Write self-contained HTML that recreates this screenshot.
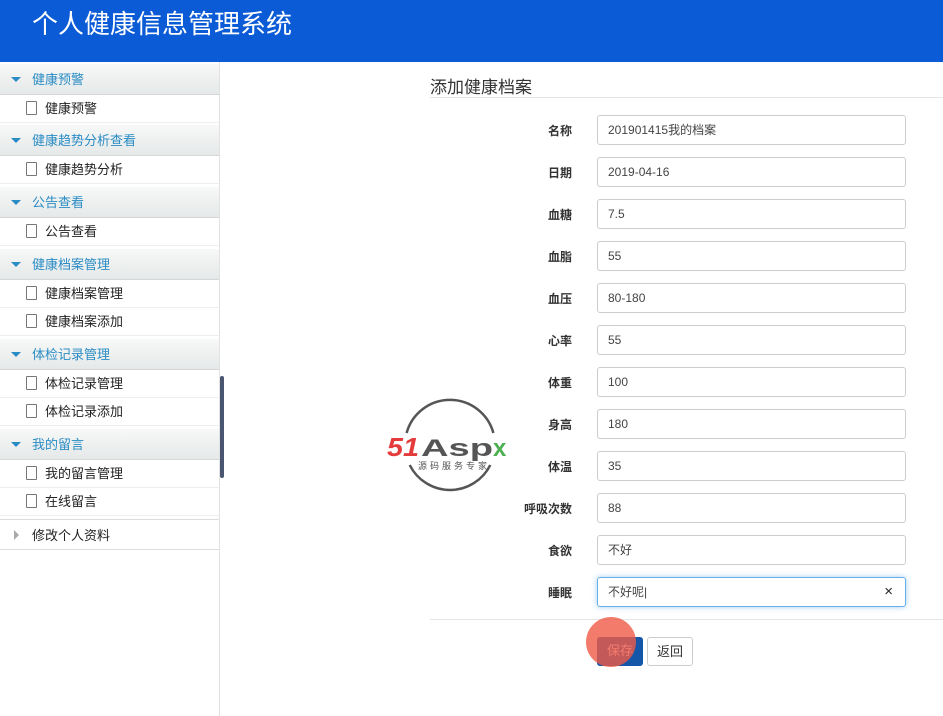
<!DOCTYPE html>
<html><head><meta charset="utf-8">
<style>
*{margin:0;padding:0;box-sizing:border-box}
body{width:943px;height:716px;position:relative;background:#fff;font-family:"Liberation Sans","Noto Sans CJK SC",sans-serif;overflow:hidden;color:#333}
.hdr{position:absolute;left:0;top:0;width:943px;height:62px;background:#0b5bd6}
.hdr h1{position:absolute;left:32px;top:4px;font-size:26px;font-weight:normal;color:#fff;letter-spacing:0px}
.side{position:absolute;left:0;top:62px;width:220px;height:654px;border-right:1px solid #e2e2e2}
.g{position:absolute;left:0;width:219px;height:31px;background:linear-gradient(#f7f8f8,#e6e9e9);border-bottom:1px solid #d6d6d6;font-size:13px;color:#2a8cc4;line-height:31px;padding-left:32px}
.g:before{content:"";position:absolute;left:11px;top:13px;border-left:5px solid transparent;border-right:5px solid transparent;border-top:5px solid #2a8cc4}
.i{position:absolute;left:0;width:219px;height:28px;font-size:13px;color:#222;line-height:28px;padding-left:45px;border-bottom:1px solid #eee}
.i:before{content:"";position:absolute;left:26px;top:6px;width:9px;height:12px;border:1px solid #777;border-radius:1px}
.last{position:absolute;left:0;top:519px;width:219px;height:31px;font-size:13px;color:#222;line-height:31px;padding-left:32px;border-bottom:1px solid #ddd;border-top:1px solid #ddd}
.last:before{content:"";position:absolute;left:14px;top:10px;border-top:5px solid transparent;border-bottom:5px solid transparent;border-left:5px solid #aaa}
.title{position:absolute;left:430px;top:73px;font-size:17px;color:#333}
.hl{position:absolute;left:430px;width:513px;height:1px;background:#e5e5e5}
.lb{position:absolute;width:150px;left:422px;text-align:right;font-size:12px;font-weight:bold;color:#333}
.in{position:absolute;left:597px;width:309px;height:30px;border:1px solid #ccc;border-radius:3px;font-size:12px;line-height:28px;padding-left:10px;color:#444}
.btn{position:absolute;top:637px;height:29px;border-radius:3px;font-size:13px;line-height:27px;text-align:center}
</style></head><body>
<div class="hdr"><h1>个人健康信息管理系统</h1></div>
<div class="side">
<div class="g" style="top:2px">健康预警</div>
<div class="i" style="top:33px">健康预警</div>
<div class="g" style="top:63px">健康趋势分析查看</div>
<div class="i" style="top:94px">健康趋势分析</div>
<div class="g" style="top:125px">公告查看</div>
<div class="i" style="top:156px">公告查看</div>
<div class="g" style="top:187px">健康档案管理</div>
<div class="i" style="top:218px">健康档案管理</div>
<div class="i" style="top:246px">健康档案添加</div>
<div class="g" style="top:277px">体检记录管理</div>
<div class="i" style="top:308px">体检记录管理</div>
<div class="i" style="top:336px">体检记录添加</div>
<div class="g" style="top:367px">我的留言</div>
<div class="i" style="top:398px">我的留言管理</div>
<div class="i" style="top:426px">在线留言</div>
<div class="last" style="top:457px">修改个人资料</div>
</div>
<div style="position:absolute;left:220px;top:376px;width:4px;height:102px;background:#4a5570;border-radius:2px"></div>
<div class="title">添加健康档案</div>
<div class="hl" style="top:97px"></div>
<div class="lb" style="top:122px">名称</div><div class="in" style="top:115px">201901415我的档案</div>
<div class="lb" style="top:164px">日期</div><div class="in" style="top:157px">2019-04-16</div>
<div class="lb" style="top:206px">血糖</div><div class="in" style="top:199px">7.5</div>
<div class="lb" style="top:248px">血脂</div><div class="in" style="top:241px">55</div>
<div class="lb" style="top:290px">血压</div><div class="in" style="top:283px">80-180</div>
<div class="lb" style="top:332px">心率</div><div class="in" style="top:325px">55</div>
<div class="lb" style="top:374px">体重</div><div class="in" style="top:367px">100</div>
<div class="lb" style="top:416px">身高</div><div class="in" style="top:409px">180</div>
<div class="lb" style="top:458px">体温</div><div class="in" style="top:451px">35</div>
<div class="lb" style="top:500px">呼吸次数</div><div class="in" style="top:493px">88</div>
<div class="lb" style="top:542px">食欲</div><div class="in" style="top:535px">不好</div>
<div class="lb" style="top:584px">睡眠</div><div class="in" style="top:577px;border-color:#66afe9;box-shadow:0 0 6px rgba(102,175,233,.6)">不好呢|<span style="position:absolute;right:12px;top:0;font-size:15px;color:#222">×</span></div>
<div class="hl" style="top:619px"></div>
<div class="btn" style="left:597px;width:46px;background:#1456a8;color:#fff">保存</div>
<div class="btn" style="left:647px;width:46px;border:1px solid #ccc;color:#333">返回</div>
<div style="position:absolute;left:586px;top:617px;width:50px;height:50px;border-radius:50%;background:rgba(240,90,70,.8)"></div>
<svg style="position:absolute;left:385px;top:395px" width="135" height="105">
<path d="M21.6 38 A45 45 0 0 1 108.4 38" fill="none" stroke="#555" stroke-width="2.5"/>
<path d="M24.7 70 A45 45 0 0 0 105.3 70" fill="none" stroke="#555" stroke-width="2.5"/>
<text x="2" y="61" font-family="Liberation Sans" font-style="italic" font-weight="bold" font-size="26" fill="#e43c3c" textLength="32" lengthAdjust="spacingAndGlyphs">51</text>
<text x="36" y="61" font-family="Liberation Sans" font-weight="bold" font-size="24" fill="#555" textLength="72" lengthAdjust="spacingAndGlyphs">Asp</text>
<text x="108" y="61" font-family="Liberation Sans" font-weight="bold" font-size="24" fill="#4caf50">x</text>
<text x="33" y="74" font-family="Noto Sans CJK SC" font-size="9" fill="#555" letter-spacing="3">源码服务专家</text>
</svg>
</body></html>
